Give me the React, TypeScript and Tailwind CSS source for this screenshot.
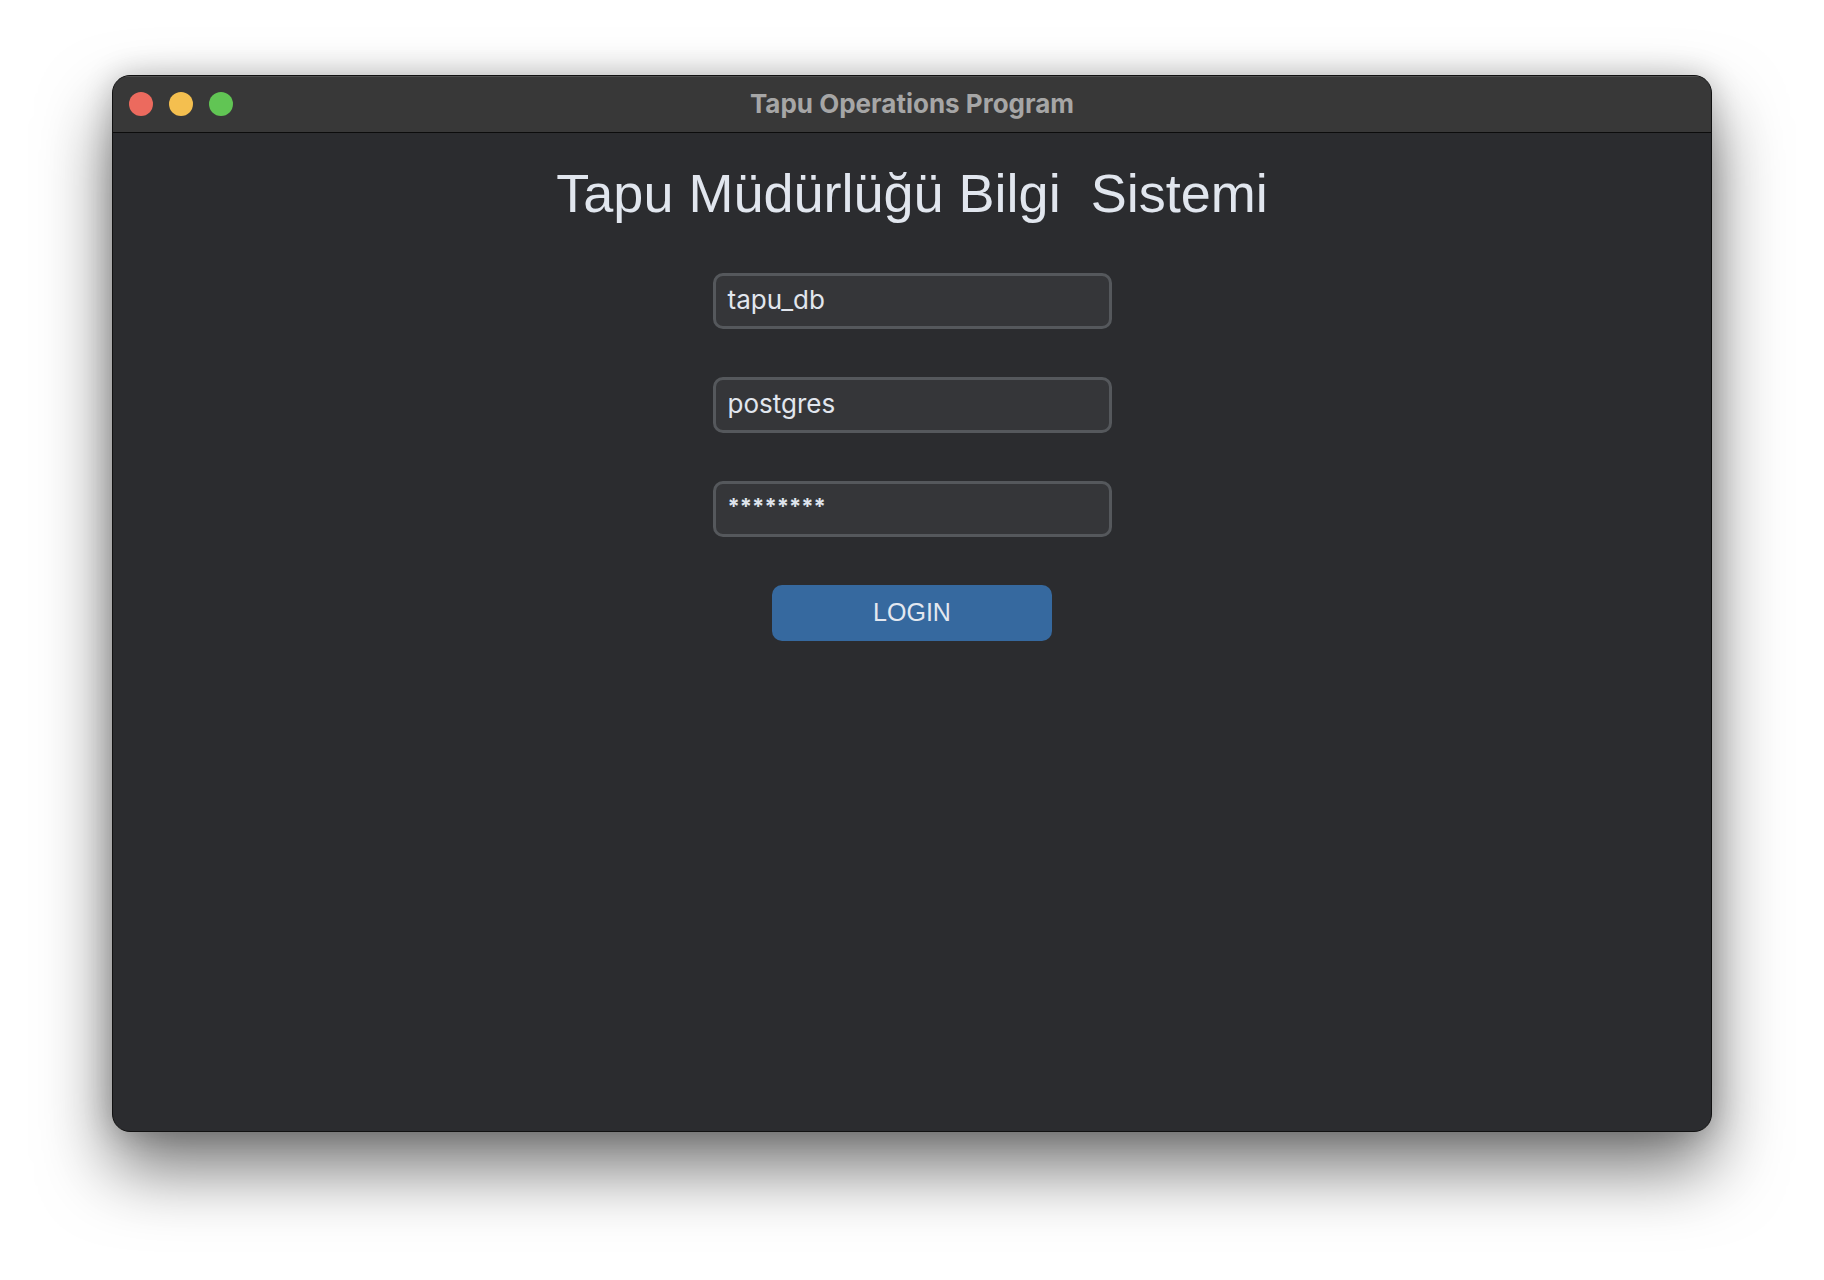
import React from 'react';

const Field: React.FC<{ value: string; secret?: boolean }> = ({ value, secret }) => (
  <div className="w-[399px] h-[56px] rounded-[10px] border-[3px] border-[#55585c] bg-[#353639] px-[12px] pt-[9px]">
    <span
      className={
        secret
          ? 'block text-[22px] leading-[24px] pt-[1px] text-[#dfe4ec] font-bold'
          : 'block text-[26px] leading-[30px] text-[#e1e6ee]'
      }
      style={{ fontFamily: 'Inter, "Noto Sans", sans-serif' }}
    >
      {value}
    </span>
  </div>
);

export default function App() {
  return (
    <div className="w-[1824px] h-[1280px] bg-[#ffffff] pl-[112px] pt-[75px]">
      <div className="w-[1600px] h-[1057px] rounded-[18px] border border-[#111] bg-[#2b2c2f] overflow-hidden shadow-[0_36px_70px_rgba(0,0,0,0.55),0_0_30px_rgba(0,0,0,0.2)] flex flex-col">
        {/* title bar */}
        <div className="relative h-[57px] shrink-0 bg-[#383838] border-b border-[#0c0c0c] flex items-center justify-center shadow-[inset_0_1px_0_rgba(255,255,255,0.12)]">
          <div className="absolute left-[16px] top-[16px] flex gap-[16px]">
            <span className="w-[24px] h-[24px] rounded-full bg-[#ec6a5e]" />
            <span className="w-[24px] h-[24px] rounded-full bg-[#f4bf4f]" />
            <span className="w-[24px] h-[24px] rounded-full bg-[#61c554]" />
          </div>
          <span
            className="text-[26px] font-bold text-[#a6a6a6] -mt-[2px]"
            style={{ fontFamily: 'Inter, "Noto Sans", sans-serif' }}
          >
            Tapu Operations Program
          </span>
        </div>

        {/* content */}
        <div className="flex-1 flex flex-col items-center pt-[20px]">
          <h1
            className="text-[54px] leading-[80px] text-[#e1e6ee] whitespace-pre"
            style={{ fontFamily: '"Liberation Sans", Arial, sans-serif' }}
          >
            Tapu Müdürlüğü Bilgi  Sistemi
          </h1>
          <div className="mt-[40px] flex flex-col gap-[48px]">
            <Field value="tapu_db" />
            <Field value="postgres" />
            <Field value="********" secret />
          </div>
          <button
            className="mt-[48px] w-[280px] h-[56px] rounded-[10px] bg-[#36699f] text-[25px] text-[#e3e8f0]"
            style={{ fontFamily: '"Liberation Sans", Arial, sans-serif' }}
          >
            LOGIN
          </button>
        </div>
      </div>
    </div>
  );
}
